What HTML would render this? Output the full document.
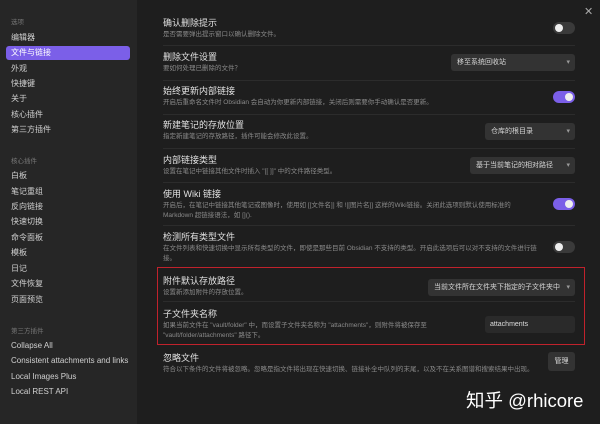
<!DOCTYPE html>
<html><head><meta charset="utf-8"><style>
*{margin:0;padding:0;box-sizing:border-box}
body{width:600px;height:424px;background:#1e1e1e;font-family:"Liberation Sans","Noto Sans CJK SC",sans-serif;color:#dcddde;position:relative;overflow:hidden}
.side{position:absolute;left:0;top:0;width:137px;height:424px;background:#262626}
.s{position:absolute;left:11px;font-size:8px;color:#d0d0d0;line-height:12px;white-space:nowrap}
.h{font-size:6.5px;color:#777}
.sel{position:absolute;left:6px;top:46px;width:124px;height:14px;background:#7b5fe8;border-radius:3px}
.t{position:absolute;left:163px;font-size:9px;color:#e0e0e0;line-height:12px;white-space:nowrap}
.d{position:absolute;left:163px;font-size:6.5px;color:#8a8a8a;line-height:10px;white-space:nowrap}
.hr{position:absolute;left:163px;width:412px;height:1px;background:#2c2c2c}
.tg{position:absolute;width:22px;height:12px;border-radius:6px;background:#3a3a3a}
.tg::after{content:"";position:absolute;top:2px;left:2px;width:8px;height:8px;border-radius:50%;background:#eee}
.tg.on{background:#7b5fe8}.tg.on::after{left:12px}
.dd{position:absolute;height:17px;background:#333;border-radius:3px;font-size:7px;color:#d6d6d6;line-height:17px;padding-left:6px;white-space:nowrap}
.dd::after{content:"▾";position:absolute;right:5px;top:0;font-size:7px;color:#999}
</style></head><body>
<div class="side">
<div class="s h" style="top:17px">选项</div>
<div class="s" style="top:32px">编辑器</div>
<div class="sel"></div>
<div class="s" style="top:47px;color:#fff">文件与链接</div>
<div class="s" style="top:63px">外观</div>
<div class="s" style="top:78px">快捷键</div>
<div class="s" style="top:93px">关于</div>
<div class="s" style="top:109px">核心插件</div>
<div class="s" style="top:124px">第三方插件</div>
<div class="s h" style="top:156px">核心插件</div>
<div class="s" style="top:170px">白板</div>
<div class="s" style="top:186px">笔记重组</div>
<div class="s" style="top:201px">反向链接</div>
<div class="s" style="top:216px">快速切换</div>
<div class="s" style="top:232px">命令面板</div>
<div class="s" style="top:247px">模板</div>
<div class="s" style="top:263px">日记</div>
<div class="s" style="top:278px">文件恢复</div>
<div class="s" style="top:294px">页面预览</div>
<div class="s h" style="top:326px">第三方插件</div>
<div class="s" style="top:340px">Collapse All</div>
<div class="s" style="top:355px">Consistent attachments and links</div>
<div class="s" style="top:371px">Local Images Plus</div>
<div class="s" style="top:386px">Local REST API</div>
</div>
<div style="position:absolute;left:584px;top:5px;font-size:11px;color:#aaa">✕</div>

<div class="t" style="top:17px">确认删除提示</div>
<div class="d" style="top:30px">是否需要弹出提示窗口以确认删除文件。</div>
<div class="tg" style="left:553px;top:22px"></div>
<div class="hr" style="top:45px"></div>

<div class="t" style="top:51px">删除文件设置</div>
<div class="d" style="top:64px">要如何处理已删除的文件？</div>
<div class="dd" style="left:451px;top:54px;width:124px">移至系统回收站</div>
<div class="hr" style="top:80px"></div>

<div class="t" style="top:85px">始终更新内部链接</div>
<div class="d" style="top:98px">开启后重命名文件时 Obsidian 会自动为你更新内部链接，关闭后则需要你手动确认是否更新。</div>
<div class="tg on" style="left:553px;top:91px"></div>
<div class="hr" style="top:114px"></div>

<div class="t" style="top:119px">新建笔记的存放位置</div>
<div class="d" style="top:132px">指定新建笔记的存放路径，插件可能会修改此设置。</div>
<div class="dd" style="left:485px;top:123px;width:90px">仓库的根目录</div>
<div class="hr" style="top:148px"></div>

<div class="t" style="top:154px">内部链接类型</div>
<div class="d" style="top:167px">设置在笔记中链接其他文件时插入 "[[ ]]" 中的文件路径类型。</div>
<div class="dd" style="left:470px;top:157px;width:105px">基于当前笔记的相对路径</div>
<div class="hr" style="top:182px"></div>

<div class="t" style="top:188px">使用 Wiki 链接</div>
<div class="d" style="top:201px">开启后，在笔记中链接其他笔记或图像时，使用如 [[文件名]] 和 ![[图片名]] 这样的Wiki链接。关闭此选项则默认使用标准的<br>Markdown 超链接语法，如 [](). </div>
<div class="tg on" style="left:553px;top:198px"></div>
<div class="hr" style="top:225px"></div>

<div class="t" style="top:231px">检测所有类型文件</div>
<div class="d" style="top:244px">在文件列表和快速切换中显示所有类型的文件，即使是那些目前 Obsidian 不支持的类型。开启此选项后可以对不支持的文件进行链<br>接。</div>
<div class="tg" style="left:553px;top:241px"></div>

<div style="position:absolute;left:157px;top:267px;width:428px;height:78px;border:1.5px solid #c0222c"></div>
<div class="t" style="top:275px">附件默认存放路径</div>
<div class="d" style="top:288px">设置新添加附件的存放位置。</div>
<div class="dd" style="left:428px;top:279px;width:147px">当前文件所在文件夹下指定的子文件夹中</div>
<div class="hr" style="top:301px"></div>
<div class="t" style="top:308px">子文件夹名称</div>
<div class="d" style="top:321px">如果当前文件在 "vault/folder" 中，而设置子文件夹名称为 "attachments"，则附件将被保存至<br>"vault/folder/attachments" 路径下。</div>
<div style="position:absolute;left:485px;top:316px;width:90px;height:17px;background:#2a2a2a;border-radius:3px;font-size:7px;line-height:17px;padding-left:5px;color:#ddd">attachments</div>

<div class="t" style="top:352px">忽略文件</div>
<div class="d" style="top:365px">符合以下条件的文件将被忽略。忽略是指文件将出现在快速切换、链接补全中队列的末尾，以及不在关系图谱和搜索结果中出现。</div>
<div style="position:absolute;left:548px;top:352px;width:27px;height:19px;background:#333;border-radius:3px;font-size:7px;line-height:19px;text-align:center;color:#ddd">管理</div>

<div style="position:absolute;left:466px;top:389px;font-size:18.5px;color:#fff;white-space:nowrap;line-height:24px">知乎 @rhicore</div>
</body></html>
